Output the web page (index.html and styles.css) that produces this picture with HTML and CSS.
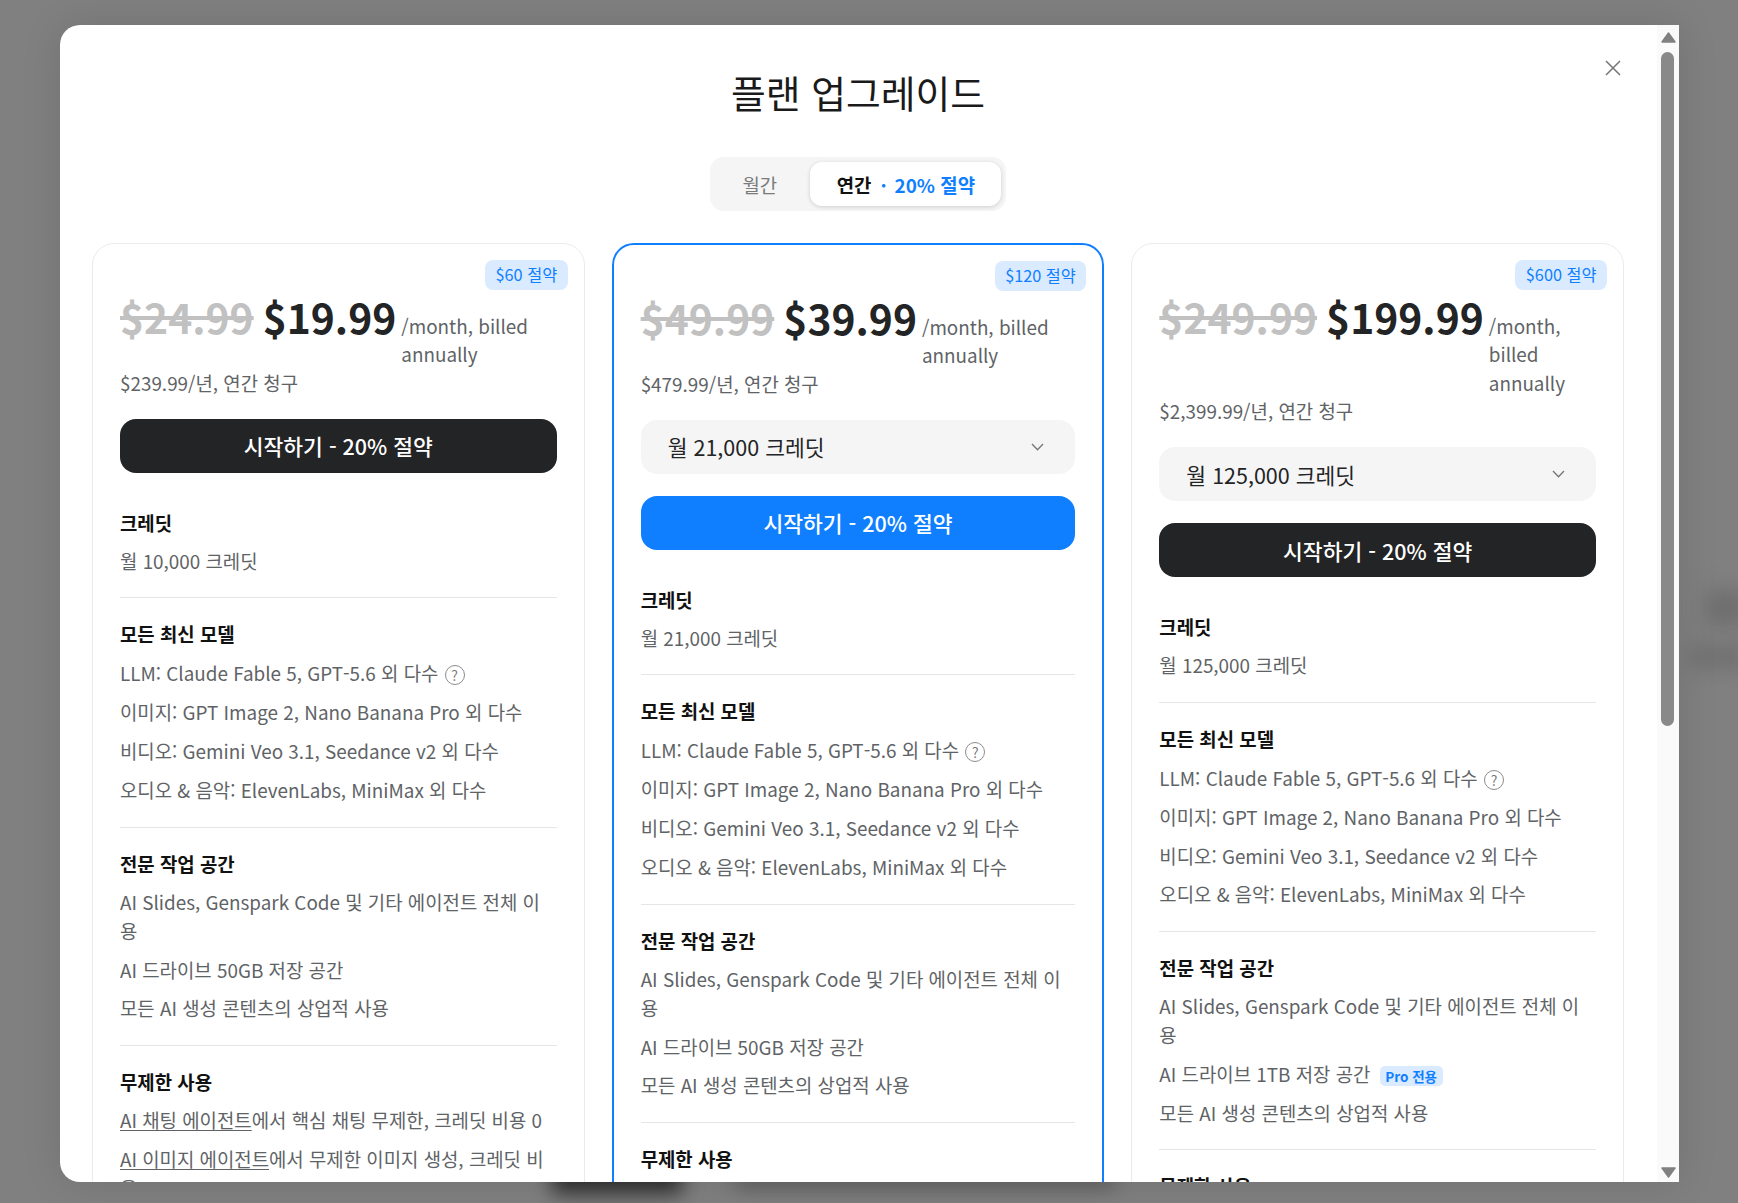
FILE: index.html
```html
<!DOCTYPE html>
<html lang="ko">
<head>
<meta charset="utf-8">
<title>플랜 업그레이드</title>
<link rel="stylesheet" href="styles.css">
</head>
<body>
<div class="blob blob-dark"></div>
<div class="blob blob-wide"></div>
<div class="blob blob-right"></div>
<div class="blob blob-right2"></div>
<div class="modal">
  <div class="content">
    <button class="close" aria-label="닫기"><svg viewBox="0 0 16 16" width="16" height="16"><path d="M1 1L15 15M15 1L1 15" fill="none" stroke="#757575" stroke-width="1.5"/></svg></button>
    <h1 class="title">플랜 업그레이드</h1>
    <div class="toggle-wrap">
      <div class="toggle">
        <span class="tab">월간</span>
        <span class="tab tab-active"><b class="tab-name">연간</b><span class="tab-save"><i class="dot">·</i>20% 절약</span></span>
      </div>
    </div>
    <div class="cards">
      <section class="card">
        <span class="save">$60 절약</span>
        <div class="price-row"><s class="old">$24.99</s><strong class="now">$19.99</strong><span class="per">/month, billed annually</span></div>
        <p class="bill">$239.99/년, 연간 청구</p>
        <button class="cta">시작하기 - 20% 절약</button>
        <div class="group"><h3>크레딧</h3><p>월 10,000 크레딧</p></div>
        <div class="group"><h3>모든 최신 모델</h3>
          <p class="with-help">LLM: Claude Fable 5, GPT-5.6 외 다수 <span class="help">?</span></p>
          <p>이미지: GPT Image 2, Nano Banana Pro 외 다수</p>
          <p>비디오: Gemini Veo 3.1, Seedance v2 외 다수</p>
          <p>오디오 &amp; 음악: ElevenLabs, MiniMax 외 다수</p></div>
        <div class="group"><h3>전문 작업 공간</h3>
          <p>AI Slides, Genspark Code 및 기타 에이전트 전체 이용</p>
          <p>AI 드라이브 50GB 저장 공간</p>
          <p>모든 AI 생성 콘텐츠의 상업적 사용</p></div>
        <div class="group"><h3>무제한 사용</h3>
          <p><u>AI 채팅 에이전트</u>에서 핵심 채팅 무제한, 크레딧 비용 0</p>
          <p><u>AI 이미지 에이전트</u>에서 무제한 이미지 생성, 크레딧 비용 0</p></div>
      </section>
      <section class="card card-featured">
        <span class="save">$120 절약</span>
        <div class="price-row"><s class="old">$49.99</s><strong class="now">$39.99</strong><span class="per">/month, billed annually</span></div>
        <p class="bill">$479.99/년, 연간 청구</p>
        <div class="select">월 21,000 크레딧<svg viewBox="0 0 13 8" width="13" height="8"><path d="M1 1L6.500 6.800L12 1" fill="none" stroke="#757575" stroke-width="1.300"/></svg></div>
        <button class="cta cta-blue">시작하기 - 20% 절약</button>
        <div class="group"><h3>크레딧</h3><p>월 21,000 크레딧</p></div>
        <div class="group"><h3>모든 최신 모델</h3>
          <p class="with-help">LLM: Claude Fable 5, GPT-5.6 외 다수 <span class="help">?</span></p>
          <p>이미지: GPT Image 2, Nano Banana Pro 외 다수</p>
          <p>비디오: Gemini Veo 3.1, Seedance v2 외 다수</p>
          <p>오디오 &amp; 음악: ElevenLabs, MiniMax 외 다수</p></div>
        <div class="group"><h3>전문 작업 공간</h3>
          <p>AI Slides, Genspark Code 및 기타 에이전트 전체 이용</p>
          <p>AI 드라이브 50GB 저장 공간</p>
          <p>모든 AI 생성 콘텐츠의 상업적 사용</p></div>
        <div class="group"><h3>무제한 사용</h3>
          <p><u>AI 채팅 에이전트</u>에서 핵심 채팅 무제한, 크레딧 비용 0</p></div>
      </section>
      <section class="card">
        <span class="save">$600 절약</span>
        <div class="price-row"><s class="old">$249.99</s><strong class="now">$199.99</strong><span class="per">/month, billed annually</span></div>
        <p class="bill">$2,399.99/년, 연간 청구</p>
        <div class="select">월 125,000 크레딧<svg viewBox="0 0 13 8" width="13" height="8"><path d="M1 1L6.500 6.800L12 1" fill="none" stroke="#757575" stroke-width="1.300"/></svg></div>
        <button class="cta">시작하기 - 20% 절약</button>
        <div class="group"><h3>크레딧</h3><p>월 125,000 크레딧</p></div>
        <div class="group"><h3>모든 최신 모델</h3>
          <p class="with-help">LLM: Claude Fable 5, GPT-5.6 외 다수 <span class="help">?</span></p>
          <p>이미지: GPT Image 2, Nano Banana Pro 외 다수</p>
          <p>비디오: Gemini Veo 3.1, Seedance v2 외 다수</p>
          <p>오디오 &amp; 음악: ElevenLabs, MiniMax 외 다수</p></div>
        <div class="group"><h3>전문 작업 공간</h3>
          <p>AI Slides, Genspark Code 및 기타 에이전트 전체 이용</p>
          <p>AI 드라이브 1TB 저장 공간 <span class="pro">Pro 전용</span></p>
          <p>모든 AI 생성 콘텐츠의 상업적 사용</p></div>
        <div class="group"><h3>무제한 사용</h3></div>
      </section>
    </div>
  </div>
  <div class="scrollbar">
    <svg class="arrow" viewBox="0 0 15 11" width="15" height="11"><path d="M7.500 1L14 10H1Z" fill="#808080" stroke="#808080" stroke-width="1.500" stroke-linejoin="round"/></svg>
    <div class="track"><div class="thumb"></div></div>
    <svg class="arrow" viewBox="0 0 15 11" width="15" height="11"><path d="M1 1H14L7.500 10Z" fill="#808080" stroke="#808080" stroke-width="1.500" stroke-linejoin="round"/></svg>
  </div>
</div>
</body>
</html>
```
FILE: styles.css
```css
* { box-sizing: border-box; }
html, body { margin: 0; height: 100%; }
body {
  background: #808080;
  font-family: "Noto Sans CJK KR", "Noto Sans", sans-serif;
  overflow: hidden;
  padding: 25px 0 0 60px;
  color: #232425;
}
.blob { position: absolute; filter: blur(10px); }
.blob-dark { left: 552px; top: 1160px; width: 130px; height: 34px; background: #303030; }
.blob-wide { left: 735px; top: 1172px; width: 380px; height: 16px; background: #5a5a5a; }
.blob-right { left: 1706px; top: 590px; width: 40px; height: 36px; background: #6e6e6e; }
.blob-right2 { left: 1690px; top: 645px; width: 60px; height: 24px; background: #707070; }

.modal {
  position: relative;
  width: 1619px;
  height: 1157px;
  background: #fff;
  border-radius: 20px 0 0 20px;
  display: flex;
  overflow: hidden;
  box-shadow: 0 0 40px rgba(0, 0, 0, .12);
}
.content {
  position: relative;
  flex: 1;
  min-width: 0;
  padding: 0 33px 0 32px;
  overflow: hidden;
}
.close {
  position: absolute;
  left: 1545px;
  top: 35px;
  width: 16px;
  height: 16px;
  padding: 0;
  border: 0;
  background: none;
  display: flex;
}
.title {
  margin: 39px 0 0;
  text-align: center;
  font-size: 37.800px;
  line-height: 56px;
  font-weight: 400;
  color: #1a1a1a;
}
.toggle-wrap { display: flex; justify-content: center; margin-top: 37px; }
.toggle {
  display: flex;
  align-items: center;
  height: 54px;
  padding: 5px;
  background: #f5f5f5;
  border-radius: 14px;
}
.tab {
  display: flex;
  align-items: center;
  height: 44px;
  padding: 0 33px 0 27.500px;
  font-size: 18.870px;
  color: #7b7b7b;
}
.tab-active {
  padding: 0 26px 0 26.500px;
  background: #fff;
  border-radius: 12px;
  box-shadow: 0 1px 4px rgba(0, 0, 0, .16);
}
.tab-name { color: #111; font-weight: 700; }
.tab-save { color: #0f7fff; font-weight: 700; }
.dot { font-style: normal; font-weight: 700; margin: 0 8px 0 9px; }

.cards {
  display: grid;
  grid-template-columns: repeat(3, 1fr);
  gap: 27px;
  margin-top: 32px;
  align-items: stretch;
}
.card {
  position: relative;
  min-height: 1100px;
  padding: 18px 27px 0;
  border: 1px solid #ebebeb;
  border-radius: 22px;
  background: #fff;
}
.card-featured { border: 2px solid #0f7fff; }
.save {
  position: absolute;
  top: 16px;
  right: 16px;
  height: 30px;
  padding: 0 10.500px 2px;
  display: flex;
  align-items: center;
  font-size: 16.300px;
  color: #0f7fff;
  background: #dbebff;
  border-radius: 8px;
}
.price-row {
  display: flex;
  align-items: baseline;
  gap: 9px;
  margin-top: 27px;
}
.old, .now { font-size: 40.800px; line-height: 56px; font-weight: 700; white-space: nowrap; flex: none; }
.old { color: #c1c1c1; }
.now { color: #232425; }
.per { font-size: 18.870px; line-height: 28.300px; color: #606366; margin-left: -4px; }
.bill { margin: 0; font-size: 18.870px; line-height: 28.300px; color: #606366; }
.select {
  display: flex;
  align-items: center;
  justify-content: space-between;
  height: 54px;
  margin-top: 22px;
  padding: 0 31px 0 27px;
  background: #f5f5f5;
  border-radius: 16px;
  font-size: 21.500px;
  color: #232425;
}
.cta {
  display: block;
  width: 100%;
  height: 54px;
  margin-top: 22px;
  border: 0;
  border-radius: 16px;
  background: #232425;
  color: #fff;
  font: 500 21.500px "Noto Sans CJK KR", sans-serif;
}
.cta-blue { background: #0f7fff; }
.group { padding: 21.900px 0; border-bottom: 1px solid #e6e6e6; }
.cta + .group { padding-top: 36px; }
.group:last-child { border-bottom: 0; }
.group h3 {
  margin: 0;
  font-size: 18.870px;
  line-height: 28.300px;
  font-weight: 700;
  color: #111;
}
.group p {
  margin: 10.300px 0 0;
  font-size: 18.870px;
  line-height: 28.600px;
  color: #606366;
}
.cta + .group p { margin-top: 9.800px; }
.group .with-help { margin: 10.800px 0 0; }
.group u { text-underline-offset: 2px; }
.help {
  display: inline-flex;
  align-items: center;
  justify-content: center;
  width: 20px;
  height: 20px;
  margin: -6px 0 -6px 1px;
  border: 1.400px solid #8c8c8c;
  border-radius: 50%;
  font-size: 14px;
  line-height: 1;
  color: #777;
  vertical-align: 0;
}
.pro {
  display: inline-flex;
  align-items: center;
  height: 20px;
  margin: -4px 0 -4px 4px;
  padding: 0 5.500px;
  background: #dbebff;
  border-radius: 5px;
  color: #0f7fff;
  font-size: 13.500px;
  font-weight: 700;
  vertical-align: 0;
}
.scrollbar {
  flex: none;
  width: 22px;
  background: #fafafa;
  display: flex;
  flex-direction: column;
  align-items: center;
  padding: 7px 0 4px;
}
.arrow { flex: none; }
.track { flex: 1; width: 100%; padding: 9px 5px 0 4px; }
.thumb { height: 674px; background: #898989; border-radius: 7px; }
```
